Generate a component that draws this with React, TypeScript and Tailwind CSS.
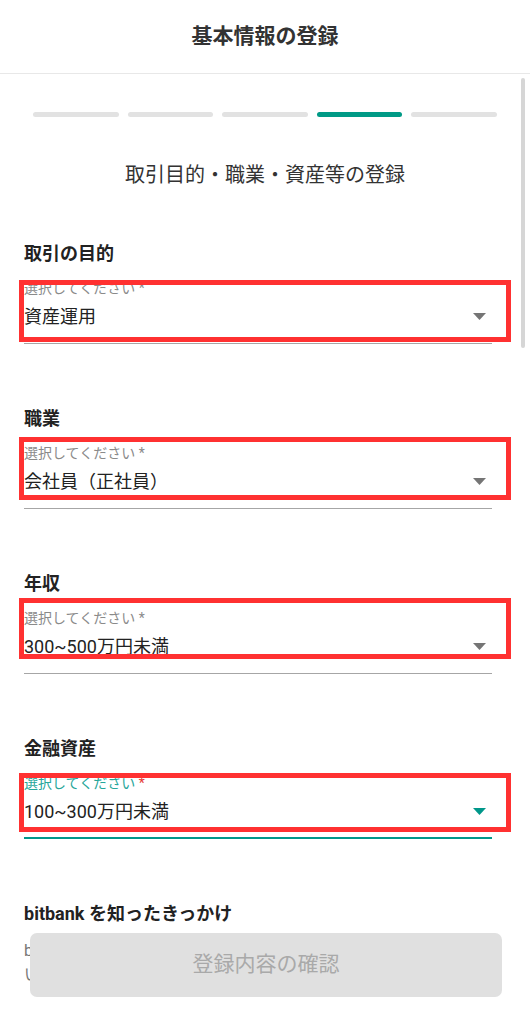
import { ReactNode } from 'react'

type Field = {
  label: string
  value: string
  focused?: boolean
  // red annotation box, offsets from section top
  boxTop: number
  boxHeight: number
}

const fields: Field[] = [
  { label: '取引の目的', value: '資産運用', boxTop: 40, boxHeight: 62 },
  { label: '職業', value: '会社員（正社員）', boxTop: 32, boxHeight: 63 },
  { label: '年収', value: '300~500万円未満', boxTop: 28, boxHeight: 61 },
  { label: '金融資産', value: '100~300万円未満', focused: true, boxTop: 38, boxHeight: 59 },
]

const Arrow = ({ focused }: { focused?: boolean }) => (
  <svg width="13" height="7" viewBox="0 0 13 7" className="shrink-0">
    <path d="M0 0h13L6.5 7z" fill={focused ? '#00978a' : '#757575'} />
  </svg>
)

const Section = ({ field }: { field: Field }) => (
  <div className="relative mb-[61px]">
    <p className="text-[18px] leading-[27px] font-bold text-[#222]">{field.label}</p>
    <div
      className={
        field.focused
          ? 'pt-[12px] pb-[12px] border-b-2 border-[#00978a]'
          : 'pt-[12px] pb-[13px] border-b border-[#a6a6a6]'
      }
    >
      <p className="text-[14px] leading-[18px]">
        <span className={field.focused ? 'text-[#26a69a]' : 'text-[#8a8a8a]'}>選択してください</span>
        <span className={field.focused ? 'text-[#e53935]' : 'text-[#8a8a8a]'}> *</span>
      </p>
      <div className="mt-[6px] flex items-center justify-between pr-[6px]">
        <span className="text-[18px] leading-[27px] text-[#222]">{field.value}</span>
        <Arrow focused={field.focused} />
      </div>
    </div>
    {/* annotation */}
    <div
      className="absolute left-[-5px] right-[-19px] border-[5px] border-[#ff3131]"
      style={{ top: field.boxTop, height: field.boxHeight }}
    />
  </div>
)

const Progress = ({ step }: { step: number }) => (
  <div className="mx-[33px] mt-[38px] grid grid-cols-5 gap-[9px]">
    {[0, 1, 2, 3, 4].map((i) => (
      <div
        key={i}
        className={i === step ? 'h-[5px] rounded-full bg-[#009a86]' : 'h-[5px] rounded-full bg-[#e2e2e2]'}
      />
    ))}
  </div>
)

const Page = ({ children }: { children: ReactNode }) => (
  <div
    className="relative h-screen w-full overflow-hidden bg-white"
    style={{ fontFamily: 'Roboto, "Noto Sans CJK JP", "Noto Sans", sans-serif' }}
  >
    {children}
  </div>
)

export default function App() {
  return (
    <Page>
      <header className="h-[74px] border-b border-[#e8e8e8] flex items-center justify-center">
        <h1 className="text-[21px] font-bold text-[#333] leading-[30px] -mt-[2px]">基本情報の登録</h1>
      </header>

      <main>
        <Progress step={3} />
        <h2 className="mt-[43px] text-center text-[20px] leading-[30px] text-[#333]">
          取引目的・職業・資産等の登録
        </h2>

        <div className="mt-[50px] pl-[24px] pr-[38px]">
          {fields.map((f) => (
            <Section key={f.label} field={f} />
          ))}

          <div>
            <p className="text-[18px] leading-[27px] font-bold text-[#222]">bitbank を知ったきっかけ</p>
            <div className="mt-[12px] text-[16px] leading-[24px] text-[#777]">
              <p>bitbankを知ったきっかけを教えてください。</p>
              <p>いずれか一つ以上を選択してください。</p>
            </div>
          </div>
        </div>
      </main>

      {/* scrollbar thumb */}
      <div className="absolute left-[521px] top-[78px] h-[270px] w-[4px] rounded-full bg-[#d6d6d6]" />

      <div className="absolute left-[30px] right-[28px] bottom-[27px]">
        <button className="w-full h-[64px] rounded-[7px] bg-[#e0e0e0] text-[21px] text-[#a9a9a9]">
          登録内容の確認
        </button>
      </div>
    </Page>
  )
}
